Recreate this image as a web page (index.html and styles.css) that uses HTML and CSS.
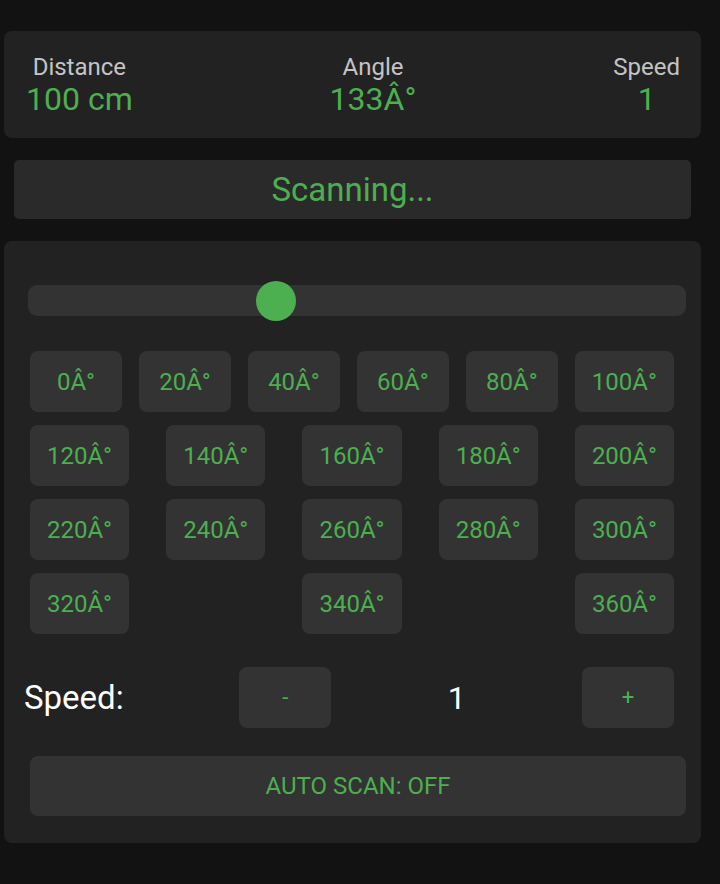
FILE: index.html
```html
<!DOCTYPE html>
<html>
<head>
<meta charset="utf-8">
<link rel="stylesheet" href="styles.css">
</head>
<body>
<div class="app">
  <div class="stats">
    <div class="stat"><div class="label">Distance</div><div class="value">100 cm</div></div>
    <div class="stat"><div class="label">Angle</div><div class="value">133Â°</div></div>
    <div class="stat"><div class="label">Speed</div><div class="value">1</div></div>
  </div>
  <div class="status">Scanning...</div>
  <div class="panel">
    <div class="slider"><div class="thumb"></div></div>
    <div class="angles">
      <button class="angle">0Â°</button>
      <button class="angle">20Â°</button>
      <button class="angle">40Â°</button>
      <button class="angle">60Â°</button>
      <button class="angle">80Â°</button>
      <button class="angle">100Â°</button>
      <button class="angle">120Â°</button>
      <button class="angle">140Â°</button>
      <button class="angle">160Â°</button>
      <button class="angle">180Â°</button>
      <button class="angle">200Â°</button>
      <button class="angle">220Â°</button>
      <button class="angle">240Â°</button>
      <button class="angle">260Â°</button>
      <button class="angle">280Â°</button>
      <button class="angle">300Â°</button>
      <button class="angle">320Â°</button>
      <button class="angle">340Â°</button>
      <button class="angle">360Â°</button>
    </div>
    <div class="speed-row">
      <span class="speed-label">Speed:</span>
      <button class="step">-</button>
      <span class="speed-value">1</span>
      <button class="step">+</button>
    </div>
    <button class="auto">AUTO SCAN: OFF</button>
  </div>
</div>
</body>
</html>
```
FILE: styles.css
```css
* { box-sizing: border-box; }
html, body {
  margin: 0;
  padding: 0;
  background: #121212;
  font-family: Roboto, "Liberation Sans", sans-serif;
}
.app {
  width: 697px;
  margin-left: 4px;
  padding-top: 31px;
}
.stats {
  height: 107px;
  background: #222222;
  border-radius: 8px;
  display: flex;
  justify-content: space-between;
  align-items: center;
  padding: 0 21px 0 22px;
}
.stat {
  text-align: center;
}
.label {
  color: #c4c4c4;
  font-size: 24px;
  line-height: 28px;
}
.value {
  color: #4caf50;
  font-size: 32px;
  line-height: 36px;
}
.status {
  margin: 22px 10px 0;
  height: 59px;
  background: #2a2a2a;
  border-radius: 5px;
  color: #4caf50;
  font-size: 33px;
  display: flex;
  align-items: center;
  justify-content: center;
}
.panel {
  margin-top: 22px;
  height: 602px;
  background: #222222;
  border-radius: 8px;
  padding: 44px 15px 0 24px;
}
.slider {
  position: relative;
  height: 31px;
  background: #333333;
  border-radius: 9px;
}
.thumb {
  position: absolute;
  left: 228px;
  top: -4px;
  width: 40px;
  height: 40px;
  border-radius: 50%;
  background: #4caf50;
}
.angles {
  margin: 35px 12px 0 2px;
  display: flex;
  flex-wrap: wrap;
  justify-content: space-between;
  row-gap: 13px;
  column-gap: 12px;
}
button {
  font-family: Roboto, "Liberation Sans", sans-serif;
  border: none;
  background: #333333;
  color: #4caf50;
  border-radius: 8px;
  margin: 0;
}
.angle {
  height: 61px;
  min-width: 92px;
  padding: 0 17px;
  font-size: 24px;
}
.speed-row {
  margin: 33px 12px 0 -4px;
  display: flex;
  justify-content: space-between;
  align-items: center;
}
.speed-label {
  color: #ffffff;
  font-size: 33px;
  width: 99px;
  white-space: nowrap;
}
.speed-value {
  color: #ffffff;
  font-size: 32px;
}
.step {
  width: 92px;
  height: 61px;
  font-size: 22px;
}
.auto {
  display: block;
  margin: 28px 0 0 2px;
  width: calc(100% - 2px);
  height: 60px;
  font-size: 24px;
}
```
